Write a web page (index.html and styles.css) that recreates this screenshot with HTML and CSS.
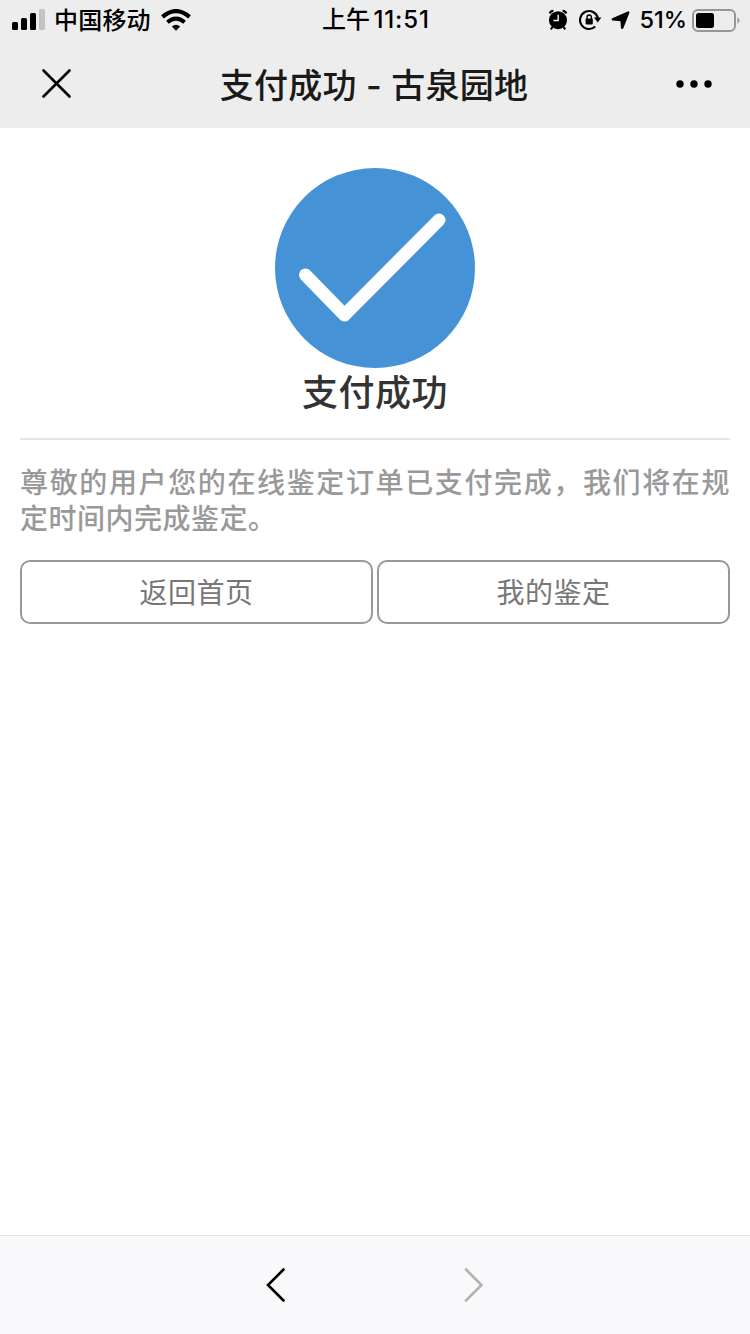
FILE: index.html
```html
<!DOCTYPE html>
<html lang="zh-CN">
<head>
    <meta charset="UTF-8">
    <meta name="viewport" content="width=device-width, initial-scale=1.0">
    <title>支付成功 - 古泉园地</title>
    <link rel="stylesheet" href="styles.css">
</head>
<body>
<header class="header">
    <div class="status-bar">
        <div class="status-left">
            <svg class="signal" width="34" height="22" viewBox="0 0 34 22">
                <rect x="0" y="13" width="6" height="8" rx="1.5"/>
                <rect x="9" y="9" width="6" height="12" rx="1.5"/>
                <rect x="18" y="4" width="6" height="17" rx="1.5"/>
                <rect x="27" y="0" width="6" height="21" rx="1.5" fill="#c3c3c3"/>
            </svg>
            <span class="carrier">中国移动</span>
            <svg class="wifi" width="30" height="22" viewBox="0 0 30 22">
                <path d="M1.5 7.9 Q15 -3.7 28.5 7.9" fill="none" stroke="#000" stroke-width="4.2"/>
                <path d="M6.4 13.3 Q15 5.8 23.6 13.3" fill="none" stroke="#000" stroke-width="4"/>
                <path d="M10.8 17.6 Q15 13.8 19.2 17.6 L15 21.7 Z"/>
            </svg>
        </div>
        <div class="status-time"><span>上午</span> 11:51</div>
        <div class="status-right">
            <svg class="alarm" width="20" height="22" viewBox="0 0 20 22">
                <circle cx="10" cy="11.2" r="9"/>
                <path d="M1.8 4.6 Q2.4 2 5.4 1.9 M18.2 4.6 Q17.6 2 14.6 1.9" fill="none" stroke="#000" stroke-width="2.2"/>
                <path d="M4.5 18 L2.8 20.4 M15.5 18 L17.2 20.4" stroke="#000" stroke-width="2"/>
                <path d="M10.2 5.8 V11.6 H5.4" fill="none" stroke="#ededed" stroke-width="1.5"/>
            </svg>
            <svg class="rotation-lock" width="23" height="22" viewBox="0 0 23 22">
                <path d="M16.2 17.6 A9 9 0 1 1 18.8 9" fill="none" stroke="#000" stroke-width="2.1"/>
                <path d="M14.9 8.5 H22.4 L18.7 13.6 Z"/>
                <rect x="6.6" y="9.6" width="7.2" height="5.8" rx=".8"/>
                <path d="M8 10 V8.2 A2.2 2.2 0 0 1 12.4 8.2 V10" fill="none" stroke="#000" stroke-width="1.4"/>
            </svg>
            <svg class="location" width="19" height="19" viewBox="0 0 19 19">
                <path d="M17.2 1.6 L11.2 16.8 L10.5 9 L1.8 8.4 Z" stroke="#000" stroke-width="2.4" stroke-linejoin="round"/>
            </svg>
            <span class="percent">51%</span>
            <svg class="battery" width="48" height="23" viewBox="0 0 48 23">
                <rect x="1" y="1" width="42" height="21" rx="5" fill="none" stroke="#969696" stroke-width="2"/>
                <rect x="4" y="4" width="18" height="15" rx="2.5"/>
                <path d="M45.5 8 Q49.5 11.5 45.5 15 Z" fill="#969696"/>
            </svg>
        </div>
    </div>
    <div class="nav-bar">
        <svg class="close" width="30" height="30" viewBox="0 0 30 30">
            <path d="M1.5 1.5 L27.5 27.5 M27.5 1.5 L1.5 27.5"/>
        </svg>
        <h1 class="nav-title">支付成功 - 古泉园地</h1>
        <svg class="more" width="36" height="8" viewBox="0 0 36 8">
            <circle cx="4" cy="4" r="3.7"/>
            <circle cx="18" cy="4" r="3.7"/>
            <circle cx="32" cy="4" r="3.7"/>
        </svg>
    </div>
</header>

<main class="content">
    <div class="result">
        <svg class="success-icon" width="200" height="200" viewBox="0 0 200 200">
            <circle cx="100" cy="100" r="100" fill="#4593d6"/>
            <path d="M30.5 107 L69.5 147 L164 52" fill="none" stroke="#fff" stroke-width="13" stroke-linecap="round" stroke-linejoin="round"/>
        </svg>
        <h2 class="result-title">支付成功</h2>
    </div>
    <p class="message">尊敬的用户您的在线鉴定订单已支付完成，我们将在规定时间内完成鉴定。</p>
    <div class="buttons">
        <a class="btn">返回首页</a>
        <a class="btn">我的鉴定</a>
    </div>
</main>

<footer class="toolbar">
    <svg class="arrow" width="20" height="34" viewBox="0 0 20 34">
        <path d="M17.5 1.5 L2 17 L17.5 32.5"/>
    </svg>
    <svg class="arrow disabled" width="20" height="34" viewBox="0 0 20 34">
        <path d="M2 1.5 L17.5 17 L2 32.5"/>
    </svg>
</footer>
</body>
</html>
```
FILE: styles.css
```css
* {
    margin: 0;
    padding: 0;
    box-sizing: border-box;
}

body {
    font-family: Inter, 'Noto Sans CJK SC', sans-serif;
    background: #fff;
    height: 100vh;
    display: flex;
    flex-direction: column;
    overflow: hidden;
}

svg {
    display: block;
    flex-shrink: 0;
}

.header {
    height: 128px;
    background: #ededed;
}

.status-bar {
    height: 40px;
    display: grid;
    grid-template-columns: 1fr auto 1fr;
    align-items: center;
    padding: 0 10px 0 12px;
    font-size: 24px;
    line-height: 40px;
    color: #000;
}

.status-left,
.status-right {
    display: flex;
    align-items: center;
}

.status-right {
    justify-content: flex-end;
}

.carrier {
    font-weight: 500;
    margin: 0 10px 0 8px;
    padding-top: 1px;
    line-height: 39px;
    letter-spacing: 0.2px;
}

.status-time {
    font-weight: 450;
    font-size: 24px;
    letter-spacing: 0.9px;
    word-spacing: -4px;
}

.status-time span {
    font-weight: 500;
    letter-spacing: 0;
}

.rotation-lock {
    margin-left: 11px;
}

.location {
    margin-left: 9px;
}

.percent {
    margin: 0 5px 0 9px;
    font-size: 23.5px;
    font-weight: 450;
}

.nav-bar {
    height: 88px;
    display: flex;
    align-items: center;
    justify-content: space-between;
    padding: 0 38px 0 42px;
}

.close path {
    stroke: #000;
    stroke-width: 2.6;
    stroke-linecap: round;
}

.nav-title {
    font-size: 34px;
    font-weight: 500;
    color: #1a1a1a;
    letter-spacing: 0.25px;
    padding-bottom: 1px;
}

.content {
    flex: 1;
    padding: 40px 20px 0;
}

.result {
    display: flex;
    flex-direction: column;
    align-items: center;
    height: 272px;
    border-bottom: 2px solid #e5e5e5;
}

.result-title {
    font-size: 36px;
    line-height: 50px;
    font-weight: 500;
    color: #333;
    letter-spacing: 0.5px;
}

.message {
    margin-top: 25px;
    font-size: 28px;
    line-height: 36px;
    font-weight: 500;
    color: #999;
    letter-spacing: 0.5px;
    text-align: justify;
}

.buttons {
    display: flex;
    gap: 4px;
    margin-top: 23px;
}

.btn {
    flex: 1;
    height: 64px;
    border: 2px solid #999;
    border-radius: 10px;
    font-size: 28px;
    line-height: 62px;
    color: #777;
    letter-spacing: 0.5px;
    text-align: center;
}

.toolbar {
    height: 99px;
    display: flex;
    justify-content: center;
    align-items: center;
    gap: 178px;
    background: #f9f9fb;
    border-top: 1px solid #e3e3e5;
}

.arrow path {
    fill: none;
    stroke: #000;
    stroke-width: 2.6;
    stroke-linecap: round;
}

.arrow.disabled path {
    stroke: #b2b2b2;
}
```
